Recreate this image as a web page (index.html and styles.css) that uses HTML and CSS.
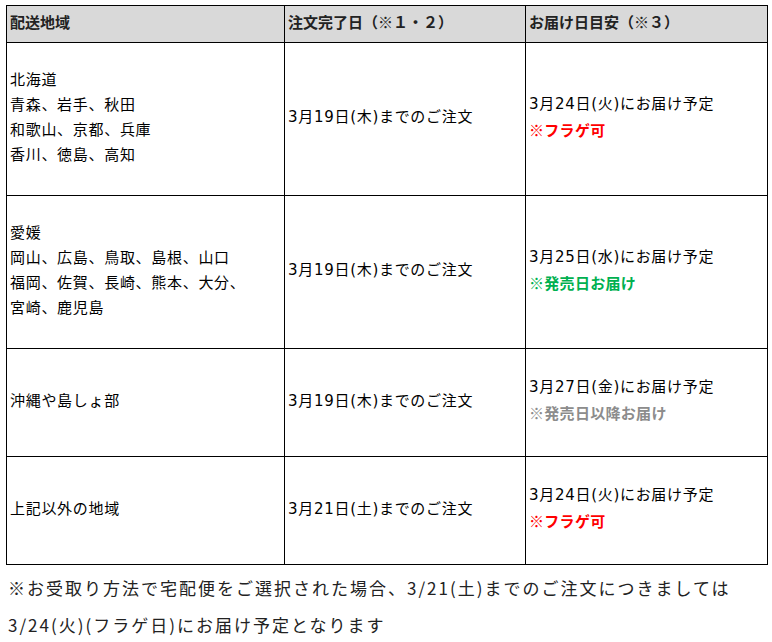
FILE: index.html
```html
<!DOCTYPE html>
<html lang="ja">
<head>
<meta charset="utf-8">
<link rel="stylesheet" href="styles.css">
</head>
<body>
<div class="wrap">
<table class="ship">
  <colgroup>
    <col class="c1"><col class="c2"><col class="c3">
  </colgroup>
  <thead>
    <tr><th>配送地域</th><th>注文完了日（※１・２）</th><th>お届け日目安（※３）</th></tr>
  </thead>
  <tbody>
    <tr class="r-tall">
      <td>北海道<br>青森、岩手、秋田<br>和歌山、京都、兵庫<br>香川、徳島、高知</td>
      <td>3月19日(木)までのご注文</td>
      <td>3月24日(火)にお届け予定<br><span class="note red">※フラゲ可</span></td>
    </tr>
    <tr class="r-tall">
      <td>愛媛<br>岡山、広島、鳥取、島根、山口<br>福岡、佐賀、長崎、熊本、大分、<br>宮崎、鹿児島</td>
      <td>3月19日(木)までのご注文</td>
      <td>3月25日(水)にお届け予定<br><span class="note green">※発売日お届け</span></td>
    </tr>
    <tr class="r-short">
      <td>沖縄や島しょ部</td>
      <td>3月19日(木)までのご注文</td>
      <td>3月27日(金)にお届け予定<br><span class="note gray">※発売日以降お届け</span></td>
    </tr>
    <tr class="r-short">
      <td>上記以外の地域</td>
      <td>3月21日(土)までのご注文</td>
      <td>3月24日(火)にお届け予定<br><span class="note red">※フラゲ可</span></td>
    </tr>
  </tbody>
</table>
<p class="foot">※お受取り方法で宅配便をご選択された場合、3/21(土)までのご注文につきましては<br>3/24(火)(フラゲ日)にお届け予定となります</p>
</div>
</body>
</html>
```

FILE: styles.css
```css
html, body {
  margin: 0;
  padding: 0;
  background: #fff;
}
body {
  font-family: "Noto Sans CJK JP", "Noto Sans", sans-serif;
  color: #000;
}
.wrap {
  padding: 5px 5px 0 6px;
}
.ship {
  border-collapse: collapse;
  width: 761px;
  table-layout: fixed;
  font-family: "DejaVu Sans", "Noto Sans CJK JP", sans-serif;
  font-size: 15px;
  line-height: 25px;
  letter-spacing: 0.7px;
}
.c1 { width: 278px; }
.c2 { width: 241px; }
.c3 { width: 242px; }
.ship th, .ship td {
  border: 1px solid #000;
  padding: 0 3px 3px;
  text-align: left;
  vertical-align: middle;
}
.ship th {
  background: #d9d9d9;
  font-family: "Noto Sans CJK JP", sans-serif;
  font-weight: bold;
  height: 30px;
  padding: 0 3px 6px;
  color: #222;
  letter-spacing: 0;
}
.r-tall td { height: 149px; }
.r-short td { height: 104px; }
.note { font-weight: bold; font-family: "Noto Sans CJK JP", sans-serif; letter-spacing: 0.3px; }
.red { color: #ff0000; }
.green { color: #00b050; }
.gray { color: #8c8c8c; }
.foot {
  margin: 4px 0 0 2px;
  font-size: 17px;
  line-height: 37px;
  letter-spacing: 2px;
  color: #222;
}
```
